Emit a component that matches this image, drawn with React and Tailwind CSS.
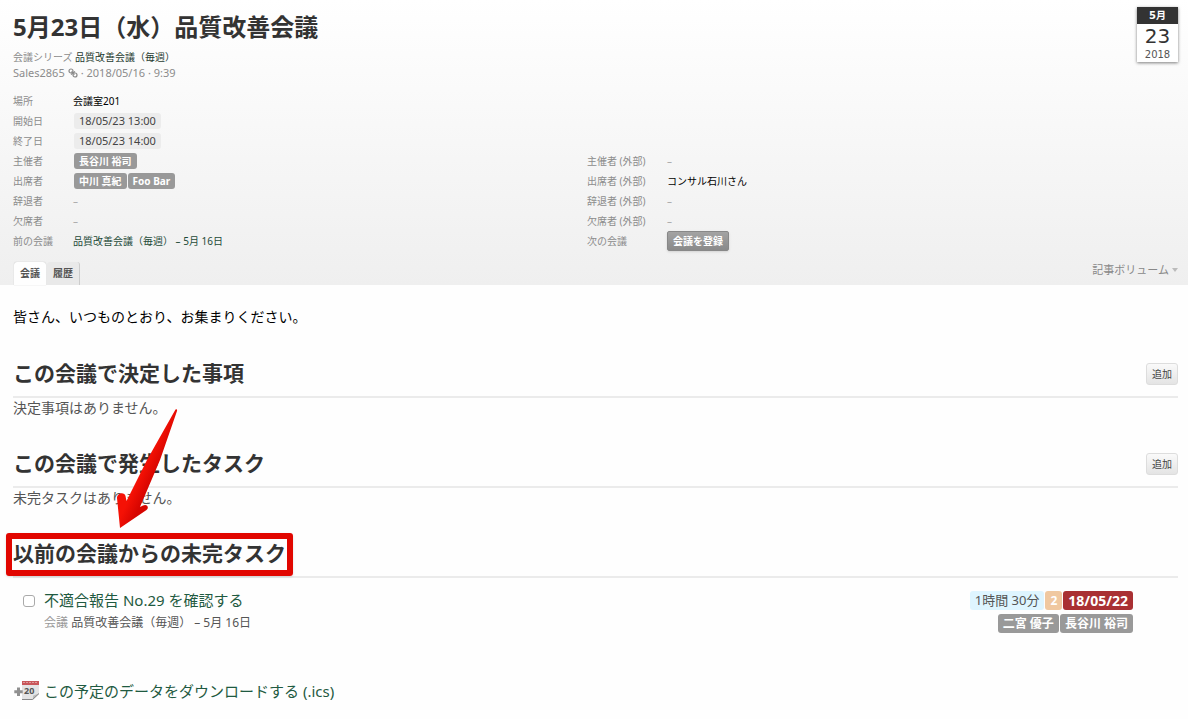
const leftRows = [
  { label: "場所", type: "text", value: "会議室201" },
  { label: "開始日", type: "date", value: "18/05/23 13:00" },
  { label: "終了日", type: "date", value: "18/05/23 14:00" },
  { label: "主催者", type: "people", value: ["長谷川 裕司"] },
  { label: "出席者", type: "people", value: ["中川 真紀", "Foo Bar"] },
  { label: "辞退者", type: "empty" },
  { label: "欠席者", type: "empty" },
  { label: "前の会議", type: "link", value: "品質改善会議（毎週） – 5月 16日" },
]

const rightRows = [
  { label: "主催者 (外部)", type: "empty" },
  { label: "出席者 (外部)", type: "text", value: "コンサル石川さん" },
  { label: "辞退者 (外部)", type: "empty" },
  { label: "欠席者 (外部)", type: "empty" },
  { label: "次の会議", type: "button", value: "会議を登録" },
]

function FieldValue({ row }) {
  switch (row.type) {
    case "date":
      return <span className="ml-px rounded-[3px] bg-[#ececec] px-[5px] text-[11px] leading-4 text-[#444]">{row.value}</span>
    case "people":
      return (
        <span className="ml-px flex gap-px">
          {row.value.map((name) => (
            <span key={name} className="rounded-[3px] bg-[#999] px-[5px] font-bold leading-4 text-white">{name}</span>
          ))}
        </span>
      )
    case "link":
      return <a href="#" className="text-[#1d4a38]">{row.value}</a>
    case "button":
      return (
        <button className="h-5 rounded-[2px] border border-[#888] bg-linear-to-b from-[#a3a3a3] to-[#8a8a8a] px-[5px] font-bold leading-4 text-white shadow-sm">
          {row.value}
        </button>
      )
    case "empty":
      return <span className="text-[#aaa]">–</span>
    default:
      return <span className="text-black">{row.value}</span>
  }
}

function Fields({ rows, labelClass }) {
  return (
    <dl className="text-[10px]">
      {rows.map((row) => (
        <div key={row.label} className="flex h-5 items-center">
          <dt className={`${labelClass} shrink-0 text-[#8c8c8c]`}>{row.label}</dt>
          <dd className="flex items-center">
            <FieldValue row={row} />
          </dd>
        </div>
      ))}
    </dl>
  )
}

function LinkIcon() {
  return (
    <svg viewBox="0 0 10 10" className="mx-[3px] mb-0.5 inline-block size-[10px]" fill="none" stroke="#888" strokeWidth="1.2">
      <circle cx="3" cy="3" r="2" />
      <circle cx="7" cy="7" r="2" />
      <path d="M3 6.500 7 3.500M3.500 3.500l3 3" />
    </svg>
  )
}

function CalendarIcon() {
  return (
    <svg viewBox="0 0 26 20" className="h-5 w-[26px] shrink-0">
      <path d="M8 0h17v13l-6 6H8z" fill="#e4e4e4" />
      <path d="M8 0h17v4H8z" fill="#c9575a" />
      <path d="M9 1.5h15" stroke="#dd9b9b" strokeWidth="1" strokeDasharray="2 1" />
      <path d="M25 12.5 18.5 19l.8-4.6z" fill="#bbb" />
      <path d="M8 18.5h10.5L25 12.500" stroke="#888" fill="none" />
      <path d="M3 6.500h3v2.700h2.700v3H6v2.700H3v-2.700H.3v-3H3z" fill="#909090" />
      <text x="10" y="13" fontSize="9" fontWeight="bold" fill="#555">20</text>
    </svg>
  )
}

function Arrow() {
  return (
    <svg viewBox="0 0 64 124" className="pointer-events-none absolute bottom-0.5 left-[103px] h-[124px] w-16">
      <defs>
        <linearGradient id="arrowFill" gradientUnits="userSpaceOnUse" x1="10" y1="90" x2="27" y2="98">
          <stop offset="0.2" stopColor="#f51105" />
          <stop offset="0.9" stopColor="#d60500" />
        </linearGradient>
      </defs>
      <path
        d="M59.500 3.500Q61.500 2.500 61 5L44 54 24 101 27 99.500C31 97.500 33.500 101.500 30.500 104L4 122 1 92C1 86.500 8.500 85.500 9.500 90L10.500 95 31 54Z"
        fill="url(#arrowFill)"
      />
    </svg>
  )
}

function Section({ title, action, children, marked }) {
  return (
    <section className="relative mb-6">
      <div className="flex h-[46px] items-center justify-between border-b-2 border-[#ebebeb]">
        <h2 className="relative text-[21px] font-bold text-[#333]">
          {title}
          {marked && (
            <span className="absolute -inset-x-[7px] -bottom-1.5 -top-[5px] rounded-[3px] border-[6px] border-[#e10600] shadow" />
          )}
        </h2>
        {action && (
          <button className="h-[22px] rounded-[3px] border border-[#ddd] bg-linear-to-b from-[#fafafa] to-[#e4e4e4] px-[5px] text-[10px] text-[#444]">
            {action}
          </button>
        )}
      </div>
      {children}
      {marked && <div className="absolute left-0 top-0"><Arrow /></div>}
    </section>
  )
}

export default function App() {
  return (
    <div className="min-h-screen bg-[#fefefe] font-['Noto_Sans','Noto_Sans_CJK_JP',sans-serif] text-[14px] text-black">
      <header className="bg-linear-to-b from-white to-[#efefef] pl-[13px] pr-[10px]">
        <div className="flex items-start justify-between">
          <div className="pt-2.5">
            <h1 className="text-[24px] font-bold leading-[34px] text-[#333]">5月23日（水）品質改善会議</h1>
            <div className="mt-1.5 text-[10px] leading-[15px] text-[#8c8c8c]">
              会議シリーズ <a href="#" className="text-[#1f3b30]">品質改善会議（毎週）</a>
            </div>
            <div className="text-[11px] leading-[15px] text-[#8c8c8c]">
              Sales2865<LinkIcon />· 2018/05/16 · 9:39
            </div>
          </div>
          <time
            dateTime="2018-05-23"
            className="mt-[7px] w-[41px] bg-white pb-px text-center font-['DejaVu_Sans','Noto_Sans_CJK_JP',sans-serif] text-[#333] shadow-[0_1px_3px_rgba(0,0,0,0.5)]"
          >
            <div className="bg-[#333] text-[10px] font-bold leading-[17px] text-white">5月</div>
            <div className="text-[20px] leading-6">23</div>
            <div className="text-[10px] leading-[13px] text-[#555]">2018</div>
          </time>
        </div>
        <div className="mt-[11px] grid grid-cols-2 items-end pr-[17px]">
          <Fields rows={leftRows} labelClass="w-[60px]" />
          <Fields rows={rightRows} labelClass="w-20" />
        </div>
        <div className="mt-[11px] flex items-start justify-between">
          <nav className="flex text-[10px] font-bold leading-[23px] text-[#555]">
            <a href="#" className="ml-px rounded-t-[3px] bg-[#fefefe] px-1.5 shadow-[0_0_1px_#aaa]">会議</a>
            <a href="#" className="ml-px rounded-t-[3px] border-r border-[#ccc] bg-[#e9e9e9] px-1.5">履歴</a>
          </nav>
          <button className="flex items-center gap-[3px] text-[11px] leading-4 text-[#888]">
            記事ボリューム
            <svg viewBox="0 0 6 4" className="h-1 w-1.5" fill="#bbb"><path d="M0 0h6L3 4z" /></svg>
          </button>
        </div>
      </header>

      <main className="pl-[13px] pr-[10px] pt-[22px]">
        <p className="mb-[25px] leading-5">皆さん、いつものとおり、お集まりください。</p>

        <Section title="この会議で決定した事項" action="追加">
          <p className="leading-5 text-[#555]">決定事項はありません。</p>
        </Section>

        <Section title="この会議で発生したタスク" action="追加">
          <p className="leading-5 text-[#555]">未完タスクはありません。</p>
        </Section>

        <Section title="以前の会議からの未完タスク" marked>
          <div className="flex items-start justify-between pl-2.5 pr-[45px] pt-3">
            <div className="flex items-start gap-[9px]">
              <input id="task" type="checkbox" className="mt-[5px] size-3 appearance-none rounded-[3px] border border-[#aaa] bg-white" />
              <div>
                <label htmlFor="task" className="block text-[15px] leading-5 text-[#1f5a41]">不適合報告 No.29 を確認する</label>
                <div className="mt-[3px] text-[12px] leading-5 text-[#999]">
                  会議 <a href="#" className="text-[#555]">品質改善会議（毎週） – 5月 16日</a>
                </div>
              </div>
            </div>
            <div className="flex flex-col items-end gap-1 pt-px text-[12px] font-bold leading-[19px] text-white">
              <div className="flex gap-px">
                <span className="rounded-[3px] bg-[#def5ff] px-[5px] text-[13px] font-normal text-[#555]">1時間 30分</span>
                <span className="rounded-[3px] bg-[#f0c8a0] px-[5px]">2</span>
                <span className="rounded-[3px] bg-[#a93033] px-[5px] text-[14px]">18/05/22</span>
              </div>
              <div className="flex gap-px">
                <span className="rounded-[3px] bg-[#999] px-[5px]">二宮 優子</span>
                <span className="rounded-[3px] bg-[#999] px-[5px]">長谷川 裕司</span>
              </div>
            </div>
          </div>
        </Section>

        <a href="#" className="mt-12 flex items-center gap-1 pb-4 pl-px text-[15px] leading-5 text-[#1f5a41]">
          <CalendarIcon />
          この予定のデータをダウンロードする (.ics)
        </a>
      </main>
    </div>
  )
}
